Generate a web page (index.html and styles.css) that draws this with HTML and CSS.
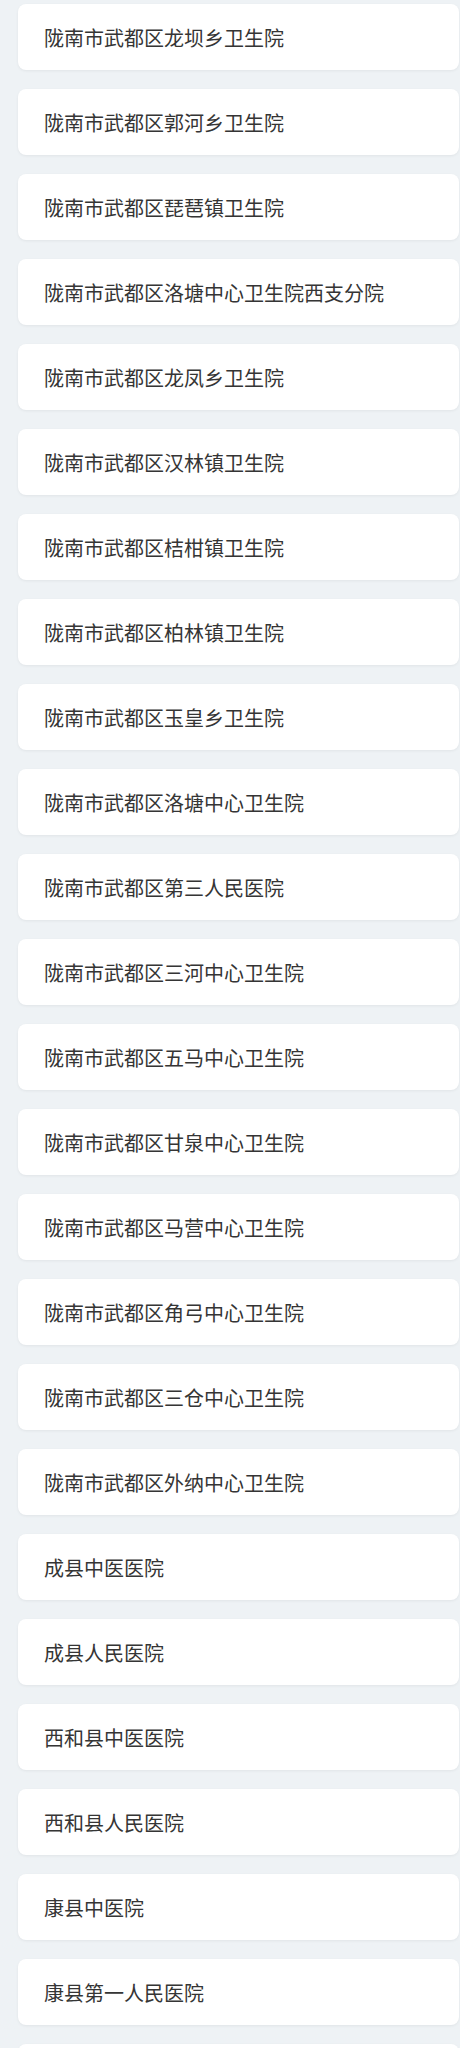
FILE: index.html
```html
<!DOCTYPE html>
<html lang="zh-CN">
<head>
<meta charset="utf-8">
<title>医院列表</title>
<link rel="stylesheet" href="styles.css">
</head>
<body>
<div class="list">
  <div class="card">陇南市武都区龙坝乡卫生院</div>
  <div class="card">陇南市武都区郭河乡卫生院</div>
  <div class="card">陇南市武都区琵琶镇卫生院</div>
  <div class="card">陇南市武都区洛塘中心卫生院西支分院</div>
  <div class="card">陇南市武都区龙凤乡卫生院</div>
  <div class="card">陇南市武都区汉林镇卫生院</div>
  <div class="card">陇南市武都区桔柑镇卫生院</div>
  <div class="card">陇南市武都区柏林镇卫生院</div>
  <div class="card">陇南市武都区玉皇乡卫生院</div>
  <div class="card">陇南市武都区洛塘中心卫生院</div>
  <div class="card">陇南市武都区第三人民医院</div>
  <div class="card">陇南市武都区三河中心卫生院</div>
  <div class="card">陇南市武都区五马中心卫生院</div>
  <div class="card">陇南市武都区甘泉中心卫生院</div>
  <div class="card">陇南市武都区马营中心卫生院</div>
  <div class="card">陇南市武都区角弓中心卫生院</div>
  <div class="card">陇南市武都区三仓中心卫生院</div>
  <div class="card">陇南市武都区外纳中心卫生院</div>
  <div class="card">成县中医医院</div>
  <div class="card">成县人民医院</div>
  <div class="card">西和县中医医院</div>
  <div class="card">西和县人民医院</div>
  <div class="card">康县中医院</div>
  <div class="card">康县第一人民医院</div>
  <div class="card"></div>
</div>
</body>
</html>
```
FILE: styles.css
```css
html, body {
  margin: 0;
  padding: 0;
  background: #eef2f5;
}
body {
  font-family: "Noto Sans CJK SC", "Noto Sans", sans-serif;
  color: #353535;
}
.list {
  display: flex;
  flex-direction: column;
  gap: 19px;
  padding: 4px 1px 20px 18px;
}
.card {
  background: #ffffff;
  border-radius: 8px;
  height: 66px;
  box-sizing: border-box;
  padding: 2px 26px 0 26px;
  display: flex;
  align-items: center;
  font-size: 20px;
  line-height: 24px;
  box-shadow: 0 1px 3px rgba(0, 0, 0, 0.06);
}
```
